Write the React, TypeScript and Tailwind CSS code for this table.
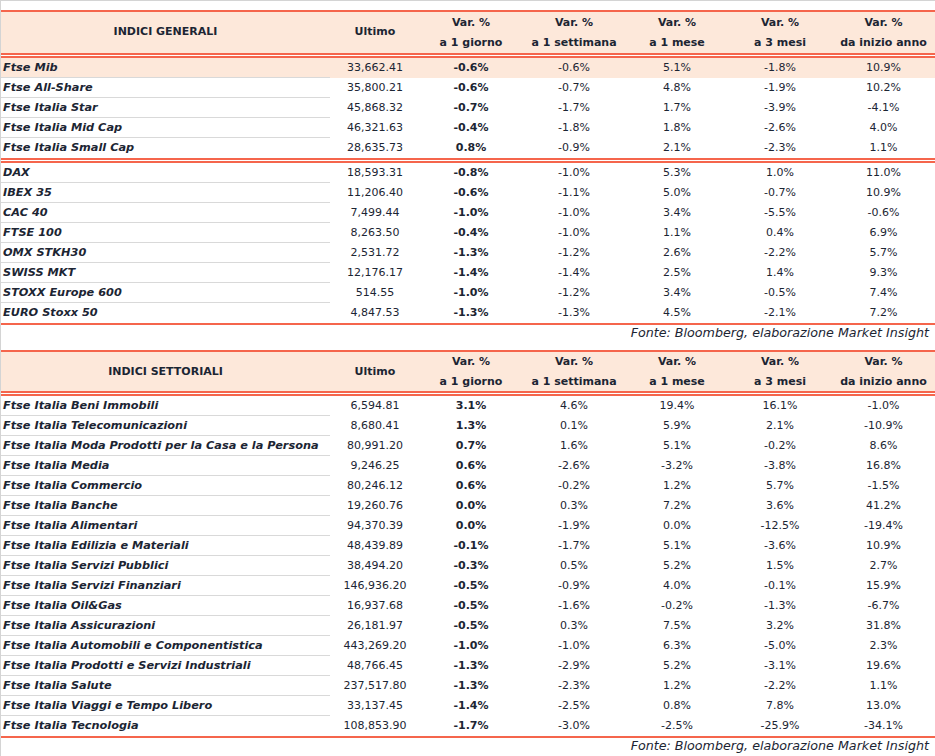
import React from 'react';

type Row = [string, string, string, string, string, string, string];

const GENERALI: Row[] = [
  ['Ftse Mib', '33,662.41', '-0.6%', '-0.6%', '5.1%', '-1.8%', '10.9%'],
  ['Ftse All-Share', '35,800.21', '-0.6%', '-0.7%', '4.8%', '-1.9%', '10.2%'],
  ['Ftse Italia Star', '45,868.32', '-0.7%', '-1.7%', '1.7%', '-3.9%', '-4.1%'],
  ['Ftse Italia Mid Cap', '46,321.63', '-0.4%', '-1.8%', '1.8%', '-2.6%', '4.0%'],
  ['Ftse Italia Small Cap', '28,635.73', '0.8%', '-0.9%', '2.1%', '-2.3%', '1.1%'],
];

const ESTERI: Row[] = [
  ['DAX', '18,593.31', '-0.8%', '-1.0%', '5.3%', '1.0%', '11.0%'],
  ['IBEX 35', '11,206.40', '-0.6%', '-1.1%', '5.0%', '-0.7%', '10.9%'],
  ['CAC 40', '7,499.44', '-1.0%', '-1.0%', '3.4%', '-5.5%', '-0.6%'],
  ['FTSE 100', '8,263.50', '-0.4%', '-1.0%', '1.1%', '0.4%', '6.9%'],
  ['OMX STKH30', '2,531.72', '-1.3%', '-1.2%', '2.6%', '-2.2%', '5.7%'],
  ['SWISS MKT', '12,176.17', '-1.4%', '-1.4%', '2.5%', '1.4%', '9.3%'],
  ['STOXX Europe 600', '514.55', '-1.0%', '-1.2%', '3.4%', '-0.5%', '7.4%'],
  ['EURO Stoxx 50', '4,847.53', '-1.3%', '-1.3%', '4.5%', '-2.1%', '7.2%'],
];

const SETTORIALI: Row[] = [
  ['Ftse Italia Beni Immobili', '6,594.81', '3.1%', '4.6%', '19.4%', '16.1%', '-1.0%'],
  ['Ftse Italia Telecomunicazioni', '8,680.41', '1.3%', '0.1%', '5.9%', '2.1%', '-10.9%'],
  ['Ftse Italia Moda Prodotti per la Casa e la Persona', '80,991.20', '0.7%', '1.6%', '5.1%', '-0.2%', '8.6%'],
  ['Ftse Italia Media', '9,246.25', '0.6%', '-2.6%', '-3.2%', '-3.8%', '16.8%'],
  ['Ftse Italia Commercio', '80,246.12', '0.6%', '-0.2%', '1.2%', '5.7%', '-1.5%'],
  ['Ftse Italia Banche', '19,260.76', '0.0%', '0.3%', '7.2%', '3.6%', '41.2%'],
  ['Ftse Italia Alimentari', '94,370.39', '0.0%', '-1.9%', '0.0%', '-12.5%', '-19.4%'],
  ['Ftse Italia Edilizia e Materiali', '48,439.89', '-0.1%', '-1.7%', '5.1%', '-3.6%', '10.9%'],
  ['Ftse Italia Servizi Pubblici', '38,494.20', '-0.3%', '0.5%', '5.2%', '1.5%', '2.7%'],
  ['Ftse Italia Servizi Finanziari', '146,936.20', '-0.5%', '-0.9%', '4.0%', '-0.1%', '15.9%'],
  ['Ftse Italia Oil&Gas', '16,937.68', '-0.5%', '-1.6%', '-0.2%', '-1.3%', '-6.7%'],
  ['Ftse Italia Assicurazioni', '26,181.97', '-0.5%', '0.3%', '7.5%', '3.2%', '31.8%'],
  ['Ftse Italia Automobili e Componentistica', '443,269.20', '-1.0%', '-1.0%', '6.3%', '-5.0%', '2.3%'],
  ['Ftse Italia Prodotti e Servizi Industriali', '48,766.45', '-1.3%', '-2.9%', '5.2%', '-3.1%', '19.6%'],
  ['Ftse Italia Salute', '237,517.80', '-1.3%', '-2.3%', '1.2%', '-2.2%', '1.1%'],
  ['Ftse Italia Viaggi e Tempo Libero', '33,137.45', '-1.4%', '-2.5%', '0.8%', '7.8%', '13.0%'],
  ['Ftse Italia Tecnologia', '108,853.90', '-1.7%', '-3.0%', '-2.5%', '-25.9%', '-34.1%'],
];

// column widths, left to right (after the 1px left frame)
const W = ['w-[329px]', 'w-[90px]', 'w-[102px]', 'w-[104px]', 'w-[102px]', 'w-[104px]', 'w-[103px]'];

const Cell: React.FC<{ i: number; className?: string; children: React.ReactNode }> = ({ i, className = '', children }) => (
  <div className={`${W[i]} shrink-0 flex items-center justify-center whitespace-nowrap ${className}`}>{children}</div>
);

const SUB = ['a 1 giorno', 'a 1 settimana', 'a 1 mese', 'a 3 mesi', 'da inizio anno'];

const Header: React.FC<{ title: string; tall?: boolean }> = ({ title, tall }) => (
  <div className={`flex bg-[#fde8da] font-bold ${tall ? 'h-[41px]' : 'h-[39px] pt-[1px]'}`}>
    <Cell i={0}>{title}</Cell>
    <Cell i={1}>Ultimo</Cell>
    {SUB.map((s, k) => (
      <div key={s} className={`${W[k + 2]} shrink-0 flex flex-col items-center justify-center whitespace-nowrap leading-[20px]`}>
        <span>Var. %</span>
        <span>{s}</span>
      </div>
    ))}
  </div>
);

const RedLine = () => <div className="h-[2px] bg-[#f5654c]" />;

const DoubleLine = () => (
  <div className="flex flex-col">
    <div className="h-[2px] bg-[#f5654c]" />
    <div className="h-[1px]" />
    <div className="h-[2px] bg-[#f5654c]" />
  </div>
);

const Rows: React.FC<{ rows: Row[]; highlightFirst?: boolean }> = ({ rows, highlightFirst }) => (
  <div className="flex flex-col">
    {rows.map((r, k) => {
      const last = k === rows.length - 1;
      return (
        <div key={r[0]} className={`flex h-[20px] pt-[1px] ${highlightFirst && k === 0 ? 'bg-[#fde8da]' : ''}`}>
          <div className={`${W[0]} shrink-0 flex items-center pl-[2px] text-[11.3px] font-bold italic whitespace-nowrap box-border ${last ? '' : 'border-b border-[#d9d9d9]'}`}>
            {r[0]}
          </div>
          <Cell i={1}>{r[1]}</Cell>
          <Cell i={2} className="font-bold">{r[2]}</Cell>
          <Cell i={3}>{r[3]}</Cell>
          <Cell i={4}>{r[4]}</Cell>
          <Cell i={5}>{r[5]}</Cell>
          <Cell i={6}>{r[6]}</Cell>
        </div>
      );
    })}
  </div>
);

const Fonte: React.FC<{ h: string }> = ({ h }) => (
  <div className={`${h} flex justify-end pr-[6px] text-[12.7px] italic leading-[16px]`}>
    Fonte: Bloomberg, elaborazione Market Insight
  </div>
);

export default function App() {
  return (
    <div
      className="w-[935px] h-[756px] overflow-hidden bg-white border-l border-t border-[#d4d4d4] box-border text-[11px] text-[#1c2533]"
      style={{ fontFamily: '"DejaVu Sans", "Liberation Sans", sans-serif' }}
    >
      <div className="h-[9px]" />
      <RedLine />
      <Header title="INDICI GENERALI" tall />
      <DoubleLine />
      <Rows rows={GENERALI} highlightFirst />
      <DoubleLine />
      <Rows rows={ESTERI} />
      <RedLine />
      <Fonte h="h-[25px]" />
      <RedLine />
      <Header title="INDICI SETTORIALI" />
      <DoubleLine />
      <Rows rows={SETTORIALI} />
      <RedLine />
      <Fonte h="h-[20px]" />
    </div>
  );
}
